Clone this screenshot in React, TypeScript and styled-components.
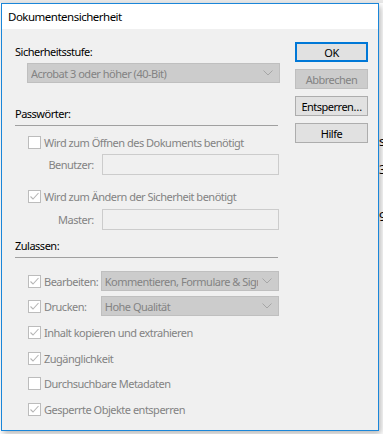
import React from "react";
import styled, { createGlobalStyle } from "styled-components";

const GlobalStyle = createGlobalStyle`
  html, body {
    margin: 0;
    padding: 0;
    background: #ffffff;
    font-family: "Noto Sans", "Open Sans", sans-serif;
    font-size: 11px;
    letter-spacing: -0.5px;
    overflow: hidden;
  }
`;

const Page = styled.div`
  display: flex;
  width: 383px;
  height: 434px;
  padding: 3px 0 0 1px;
  box-sizing: border-box;
  background: linear-gradient(#e8e8e8, #e8e8e8) no-repeat 0 0 / 100% 3px, #ffffff;
`;

const Window = styled.div`
  width: 378px;
  height: 428px;
  box-sizing: border-box;
  border: 1px solid #1a86d9;
  background: #f0f0f0;
  display: flex;
  flex-direction: column;
  box-shadow: 2px 3px 6px rgba(0, 0, 0, 0.28);
  flex-shrink: 0;
`;

const TitleBar = styled.div`
  height: 25px;
  background: #ffffff;
  display: flex;
  align-items: center;
  padding-left: 6px;
  color: #000;
  font-size: 11.5px;
`;

const Body = styled.div`
  display: flex;
  flex: 1;
`;

const Left = styled.div`
  width: 264px;
  padding: 15px 0 0 13px;
  display: flex;
  flex-direction: column;
`;

const Right = styled.div`
  padding: 13px 0 0 16px;
  display: flex;
  flex-direction: column;
  gap: 7px;
`;

const Heading = styled.div<{ $top?: number }>`
  color: #000;
  height: 16px;
  line-height: 16px;
  margin-top: ${(p) => p.$top ?? 0}px;
`;

const Rule = styled.div`
  height: 1px;
  background: #a0a0a0;
  width: 263px;
  margin-top: 3px;
`;

const Select = styled.div<{ $width: number; $top?: number; $left?: number }>`
  width: ${(p) => p.$width}px;
  height: 20px;
  box-sizing: border-box;
  border: 1px solid #bfbfbf;
  background: #cccccc;
  color: #838383;
  display: flex;
  align-items: center;
  padding: 0 6px 0 3px;
  margin-top: ${(p) => p.$top ?? 0}px;
  margin-left: ${(p) => p.$left ?? 0}px;
  overflow: hidden;
  white-space: nowrap;
`;

const SelectText = styled.span`
  flex: 1;
  overflow: hidden;
`;

const Chevron = () => (
  <svg width="10" height="6" viewBox="0 0 10 6" style={{ flexShrink: 0, marginLeft: 4 }}>
    <path d="M0.5 0.5 L5 5 L9.5 0.5" fill="none" stroke="#a6a6a6" strokeWidth="1" />
  </svg>
);

const CheckRow = styled.div<{ $top?: number }>`
  display: flex;
  align-items: center;
  height: 20px;
  margin-left: 13px;
  margin-top: ${(p) => p.$top ?? 0}px;
  color: #838383;
`;

const Box = styled.div`
  width: 13px;
  height: 13px;
  box-sizing: border-box;
  border: 1px solid #bcbcbc;
  background: #ffffff;
  display: flex;
  align-items: center;
  justify-content: center;
  margin-right: 3px;
  flex-shrink: 0;
`;

const Check = ({ on }: { on?: boolean }) => (
  <Box>
    {on && (
      <svg width="11" height="11" viewBox="0 0 11 11">
        <path d="M1.5 5.5 L4 8 L9.5 2" fill="none" stroke="#b5b5b5" strokeWidth="1.1" />
      </svg>
    )}
  </Box>
);

const RowLabel = styled.span<{ $width?: number }>`
  display: inline-block;
  width: ${(p) => (p.$width ? `${p.$width}px` : "auto")};
  white-space: nowrap;
`;

const FieldRow = styled.div<{ $top?: number }>`
  display: flex;
  align-items: center;
  margin-top: ${(p) => p.$top ?? 0}px;
`;

const FieldLabel = styled.span`
  width: 79px;
  text-align: right;
  color: #838383;
  margin-right: 8px;
`;

const Input = styled.div`
  width: 178px;
  height: 21px;
  box-sizing: border-box;
  border: 1px solid #cccccc;
  background: #f0f0f0;
`;

const Button = styled.div<{ $primary?: boolean; $disabled?: boolean }>`
  width: 73px;
  height: 20px;
  box-sizing: border-box;
  display: flex;
  align-items: center;
  justify-content: center;
  border: ${(p) =>
    p.$primary ? "2px solid #0078d7" : p.$disabled ? "1px solid #bfbfbf" : "1px solid #adadad"};
  background: ${(p) => (p.$disabled ? "#cccccc" : "#e1e1e1")};
  color: ${(p) => (p.$disabled ? "#838383" : "#000")};
  white-space: nowrap;
`;

const Backdrop = styled.div`
  flex: 1;
  overflow: hidden;
  color: #000;
  font-size: 13px;
`;

const Fragment = styled.div<{ $top: number }>`
  margin-top: ${(p) => p.$top}px;
  height: 16px;
  line-height: 16px;
`;

export default function App() {
  return (
    <>
      <GlobalStyle />
      <Page>
        <Window>
          <TitleBar>Dokumentensicherheit</TitleBar>
          <Body>
            <Left>
              <Heading>Sicherheitsstufe:</Heading>
              <Select $width={253} $left={12} $top={3}>
                <SelectText>Acrobat 3 oder höher (40-Bit)</SelectText>
                <Chevron />
              </Select>

              <Heading $top={23}>Passwörter:</Heading>
              <Rule />
              <CheckRow $top={6}>
                <Check />
                <RowLabel>Wird zum Öffnen des Dokuments benötigt</RowLabel>
              </CheckRow>
              <FieldRow $top={2}>
                <FieldLabel>Benutzer:</FieldLabel>
                <Input />
              </FieldRow>
              <CheckRow $top={11}>
                <Check on />
                <RowLabel>Wird zum Ändern der Sicherheit benötigt</RowLabel>
              </CheckRow>
              <FieldRow $top={3}>
                <FieldLabel>Master:</FieldLabel>
                <Input />
              </FieldRow>

              <Heading $top={8}>Zulassen:</Heading>
              <Rule />
              <CheckRow $top={13}>
                <Check on />
                <RowLabel $width={57}>Bearbeiten:</RowLabel>
                <Select $width={179}>
                  <SelectText>Kommentieren, Formulare &amp; Signieren</SelectText>
                  <Chevron />
                </Select>
              </CheckRow>
              <CheckRow $top={5}>
                <Check on />
                <RowLabel $width={57}>Drucken:</RowLabel>
                <Select $width={179}>
                  <SelectText>Hohe Qualität</SelectText>
                  <Chevron />
                </Select>
              </CheckRow>
              <CheckRow $top={6}>
                <Check on />
                <RowLabel>Inhalt kopieren und extrahieren</RowLabel>
              </CheckRow>
              <CheckRow $top={6}>
                <Check on />
                <RowLabel>Zugänglichkeit</RowLabel>
              </CheckRow>
              <CheckRow $top={5}>
                <Check />
                <RowLabel>Durchsuchbare Metadaten</RowLabel>
              </CheckRow>
              <CheckRow $top={6}>
                <Check on />
                <RowLabel>Gesperrte Objekte entsperren</RowLabel>
              </CheckRow>
            </Left>
            <Right>
              <Button $primary>OK</Button>
              <Button $disabled>Abbrechen</Button>
              <Button>Entsperren…</Button>
              <Button>Hilfe</Button>
            </Right>
          </Body>
        </Window>
        <Backdrop>
          <Fragment $top={130}>s</Fragment>
          <Fragment $top={12}>3</Fragment>
          <Fragment $top={31}>9</Fragment>
        </Backdrop>
      </Page>
    </>
  );
}
